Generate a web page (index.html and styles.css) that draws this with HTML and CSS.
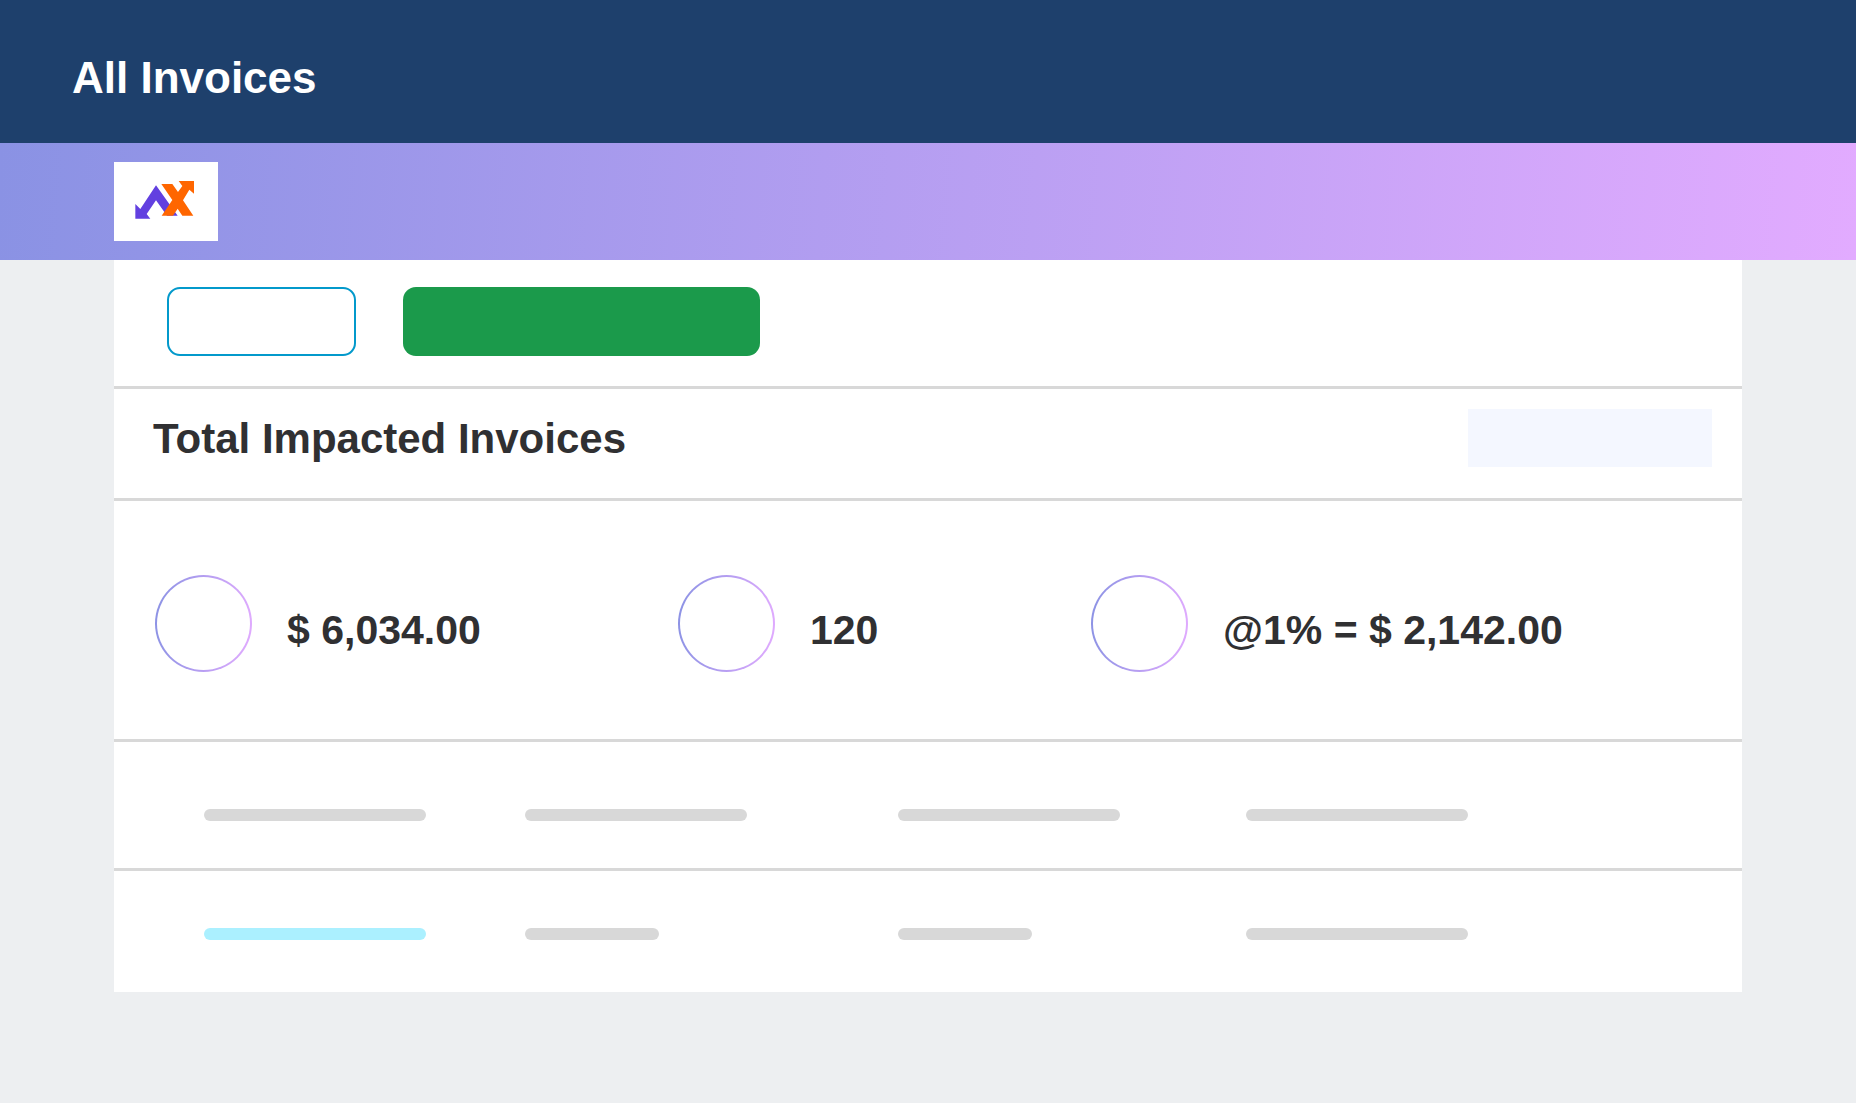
FILE: index.html
```html
<!DOCTYPE html>
<html lang="en">
<head>
    <meta charset="UTF-8">
    <meta name="viewport" content="width=device-width, initial-scale=1.0">
    <title>All Invoices</title>
    <link rel="stylesheet" href="styles.css">
</head>
<body>
    <header class="page-header">
        <h1>All Invoices</h1>
    </header>

    <div class="brand-bar">
        <a class="brand" href="#" aria-label="Home">
            <svg class="brand-logo" viewBox="0 0 312 237" aria-hidden="true">
                <path fill="#6240e0" d="M64 126 L79 141 L126 70 L191 161 H159 L126 115 L98 156 L109 170 H64 Z"/>
                <path fill="#ff6600" d="M142 66 H175 L192 90 L205 72 L194 57 H240 V95 L226 83 L207 115 L238 161 H205 L191 140 L177 161 H143 L175 114 Z"/>
            </svg>
        </a>
    </div>

    <main class="card">
        <div class="actions">
            <button type="button" class="btn btn-outline" aria-label="Back"></button>
            <button type="button" class="btn btn-primary" aria-label="Submit"></button>
        </div>

        <div class="section-head">
            <h2>Total Impacted Invoices</h2>
            <button type="button" class="filter" aria-label="Filter"></button>
        </div>

        <div class="stats">
            <div class="stat">
                <span class="ring"></span>
                <span class="stat-value">$ 6,034.00</span>
            </div>
            <div class="stat">
                <span class="ring"></span>
                <span class="stat-value">120</span>
            </div>
            <div class="stat">
                <span class="ring"></span>
                <span class="stat-value">@1% = $ 2,142.00</span>
            </div>
        </div>

        <table class="invoices">
            <colgroup>
                <col class="col-number">
                <col class="col-date">
                <col class="col-status">
                <col>
            </colgroup>
            <thead>
                <tr>
                    <th><div class="line"></div></th>
                    <th><div class="line"></div></th>
                    <th><div class="line"></div></th>
                    <th><div class="line"></div></th>
                </tr>
            </thead>
            <tbody>
                <tr>
                    <td><div class="line line-link"></div></td>
                    <td><div class="line line-short"></div></td>
                    <td><div class="line line-short"></div></td>
                    <td><div class="line"></div></td>
                </tr>
            </tbody>
        </table>
    </main>
</body>
</html>
```
FILE: styles.css
```css
* {
    box-sizing: border-box;
}
body {
    margin: 0;
    font-family: "Liberation Sans", Arial, sans-serif;
    color: #303032;
    background: #edeff1;
}
h1, h2 {
    margin: 0;
    font-weight: bold;
}

/* Header */
.page-header {
    padding: 52px 72px 39px;
    background: #1e406c;
    color: #fff;
}
h1 {
    font-size: 44px;
    line-height: 52px;
}
.brand-bar {
    padding: 19px 114px;
    background: linear-gradient(94deg, #8a92e4, #e2abff);
}
.brand {
    display: block;
    width: 104px;
    background: #fff;
}
.brand-logo {
    display: block;
    width: 104px;
    height: 79px;
}

/* Card */
.card {
    margin: 0 114px;
    background: #fff;
}
.actions {
    display: flex;
    gap: 47px;
    padding: 27px 53px 30px;
    border-bottom: 3px solid #d8d8d8;
}
.btn {
    height: 69px;
    border: none;
    border-radius: 13px;
}
.btn-outline {
    width: 189px;
    border: 2px solid #0399cb;
    background: #fff;
}
.btn-primary {
    width: 357px;
    background: #1b9a4b;
}
.section-head {
    display: flex;
    justify-content: space-between;
    align-items: flex-start;
    padding: 20px 30px 29px 39px;
    border-bottom: 3px solid #d8d8d8;
}
h2 {
    font-size: 42px;
    line-height: 60px;
}
.filter {
    width: 244px;
    height: 58px;
    border: none;
    background: #f4f7ff;
}

/* Stats */
.stats {
    display: grid;
    grid-template-columns: 523fr 413fr 651fr;
    padding: 74px 0 67px 41px;
    border-bottom: 3px solid #d8d8d8;
}
.stat {
    display: flex;
    align-items: center;
    gap: 35px;
}
.ring {
    width: 97px;
    height: 97px;
    border: 2px solid transparent;
    border-radius: 50%;
    background: linear-gradient(#fff, #fff) padding-box,
                linear-gradient(94deg, #8a92e4, #e2abff) border-box;
}
.stat-value {
    padding-top: 12px;
    font-size: 41px;
    font-weight: bold;
    line-height: 48px;
}

/* Table */
.invoices {
    width: 100%;
    table-layout: fixed;
    border-collapse: collapse;
}
.col-number {
    width: 19.7%;
}
.col-date {
    width: 22.9%;
}
.col-status {
    width: 21.4%;
}
.invoices th {
    padding: 67px 0 47px 90px;
    border-bottom: 3px solid #d8d8d8;
}
.invoices td {
    padding: 57px 0 52px 90px;
}
.line {
    width: 222px;
    height: 12px;
    border-radius: 6px;
    background: #d8d8d8;
}
.line-short {
    width: 134px;
}
.line-link {
    background: #abf0ff;
}
```
